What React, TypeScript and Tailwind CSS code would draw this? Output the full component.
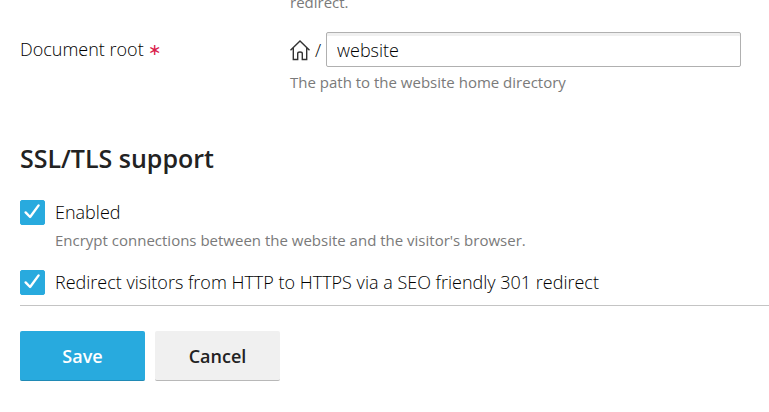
import type { ReactNode } from "react";

function Checkbox({ id, children, hint }: { id: string; children: ReactNode; hint?: string }) {
  return (
    <div className="flex gap-2.5">
      <span className="grid size-[25px] shrink-0 *:col-start-1 *:row-start-1">
        <input id={id} type="checkbox" defaultChecked className="peer size-full appearance-none rounded-xs border border-[#b7b7b7] checked:border-[#28aade] checked:bg-[#28aade]" />
        <svg viewBox="0 0 25 25" className="pointer-events-none invisible size-full peer-checked:visible" fill="none" stroke="white" strokeWidth="2.4" strokeLinecap="round" strokeLinejoin="round">
          <path d="M5.6 12.4 L10.1 17 L18.6 5.4" />
        </svg>
      </span>
      <div>
        <label htmlFor={id} className="block text-lg leading-6 font-light text-black">{children}</label>
        {hint && <p className="mt-1 text-[15px] leading-6 text-[#7a7a7a]">{hint}</p>}
      </div>
    </div>
  );
}

export default function App() {
  return (
    <form className="bg-white pl-5 pb-8 font-['Open_Sans','Noto_Sans',sans-serif] text-[#222]" onSubmit={(e) => e.preventDefault()}>
      <div className="flex h-8 items-start pl-[270px]">
        <p className="-mt-2 text-[15px] leading-5 text-[#7a7a7a]">redirect.</p>
      </div>
      <div className="flex pr-7">
        <label htmlFor="root" className="flex w-[270px] shrink-0 gap-1 text-lg leading-[35px] font-light text-black">
          Document root
          <span className="text-base leading-[35px] text-[#d9204c]">∗</span>
        </label>
        <div className="min-w-0 grow">
          <div className="flex items-center">
            <svg viewBox="0 0 20 22" className="h-[22px] w-5" fill="none" stroke="#333" strokeWidth="1.4">
              <path d="M0.5 11.2 L10 1.9 L19.5 11.2 M3.3 9 V20.5 H7.7 V14.6 Q7.7 13 10 13 Q12.3 13 12.3 14.6 V20.5 H16.7 V9" />
            </svg>
            <span className="w-4 text-center text-lg font-light text-black">/</span>
            <input id="root" defaultValue="website" className="h-[35px] min-w-0 grow rounded-xs border border-[#b0b0b0] px-2.5 text-lg font-light text-black inset-shadow-[0_3px_0_#f0f0f0] outline-none" />
          </div>
          <p className="mt-1 text-[15px] leading-[23px] text-[#7a7a7a]">The path to the website home directory</p>
        </div>
      </div>
      <h2 className="mt-[47px] text-[25px] leading-[34px] font-semibold">SSL/TLS support</h2>
      <div className="mt-[25px] flex flex-col gap-[18px]">
        <Checkbox id="enabled" hint="Encrypt connections between the website and the visitor's browser.">Enabled</Checkbox>
        <Checkbox id="redirect">Redirect visitors from HTTP to HTTPS via a SEO friendly 301 redirect</Checkbox>
      </div>
      <div className="mt-2.5 flex gap-2.5 border-t border-[#c4c4c4] pt-[25px]">
        <button type="submit" className="h-[50px] w-[125px] rounded-xs border-b border-[#208ab5] bg-[#28aade] text-lg font-semibold text-white">Save</button>
        <button type="button" className="h-[50px] w-[125px] rounded-xs border-b border-[#b8b8b8] bg-[#f0f0f0] text-lg font-semibold">Cancel</button>
      </div>
    </form>
  );
}
